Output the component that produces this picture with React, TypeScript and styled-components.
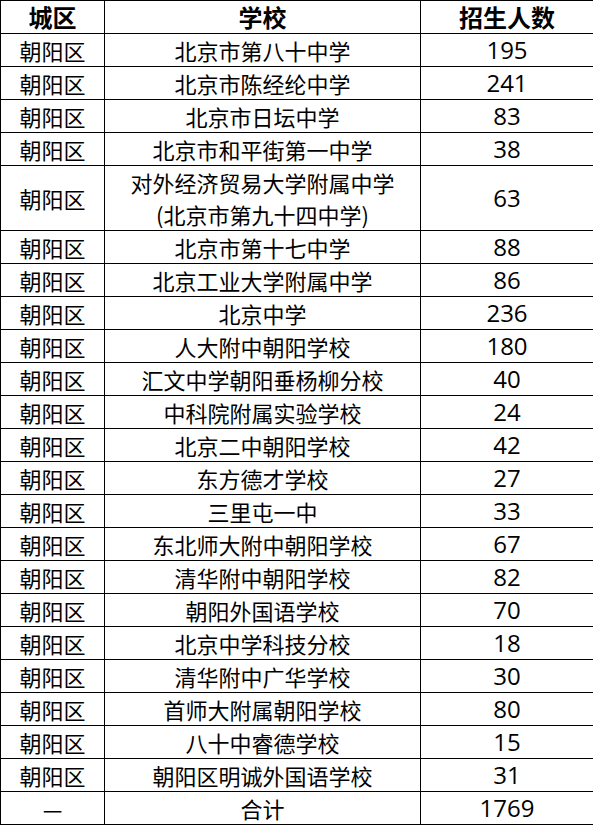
import styled, { createGlobalStyle } from 'styled-components'

const GlobalStyle = createGlobalStyle`
    html, body {
        margin: 0;
        padding: 0;
        background: #fff;
    }
    body {
        font-family: "Noto Sans CJK SC", "Noto Sans", sans-serif;
        color: #000;
    }
`

const Table = styled.table`
    width: 593px;
    table-layout: fixed;
    border-collapse: collapse;
`

const Cell = styled.td<{ $head?: boolean }>`
    border: 1px solid #000;
    padding: 0;
    height: 32px;
    line-height: 32px;
    text-align: center;
    vertical-align: middle;
    font-size: ${(p) => (p.$head ? '24px' : '22px')};
    font-weight: ${(p) => (p.$head ? 700 : 400)};
    white-space: nowrap;
    overflow: hidden;
`

const Line = styled.div`
    height: 32px;
    line-height: 32px;
`

const Count = styled(Cell)`
    font-family: "Open Sans", "Noto Sans CJK SC", sans-serif;
    font-size: 24px;
`

const rows: [string, string[], number][] = [
    ['朝阳区', ['北京市第八十中学'], 195],
    ['朝阳区', ['北京市陈经纶中学'], 241],
    ['朝阳区', ['北京市日坛中学'], 83],
    ['朝阳区', ['北京市和平街第一中学'], 38],
    ['朝阳区', ['对外经济贸易大学附属中学', '(北京市第九十四中学)'], 63],
    ['朝阳区', ['北京市第十七中学'], 88],
    ['朝阳区', ['北京工业大学附属中学'], 86],
    ['朝阳区', ['北京中学'], 236],
    ['朝阳区', ['人大附中朝阳学校'], 180],
    ['朝阳区', ['汇文中学朝阳垂杨柳分校'], 40],
    ['朝阳区', ['中科院附属实验学校'], 24],
    ['朝阳区', ['北京二中朝阳学校'], 42],
    ['朝阳区', ['东方德才学校'], 27],
    ['朝阳区', ['三里屯一中'], 33],
    ['朝阳区', ['东北师大附中朝阳学校'], 67],
    ['朝阳区', ['清华附中朝阳学校'], 82],
    ['朝阳区', ['朝阳外国语学校'], 70],
    ['朝阳区', ['北京中学科技分校'], 18],
    ['朝阳区', ['清华附中广华学校'], 30],
    ['朝阳区', ['首师大附属朝阳学校'], 80],
    ['朝阳区', ['八十中睿德学校'], 15],
    ['朝阳区', ['朝阳区明诚外国语学校'], 31],
    ['—', ['合计'], 1769],
]

export default function App() {
    return (
        <>
            <GlobalStyle />
            <Table>
                <colgroup>
                    <col style={{ width: 104 }} />
                    <col style={{ width: 316 }} />
                    <col style={{ width: 173 }} />
                </colgroup>
                <thead>
                    <tr>
                        <Cell as="th" $head>城区</Cell>
                        <Cell as="th" $head>学校</Cell>
                        <Cell as="th" $head>招生人数</Cell>
                    </tr>
                </thead>
                <tbody>
                    {rows.map(([area, school, count], i) => (
                        <tr key={i}>
                            <Cell>{area}</Cell>
                            <Cell>
                                {school.map((line, j) => (
                                    <Line key={j}>{line}</Line>
                                ))}
                            </Cell>
                            <Count>{count}</Count>
                        </tr>
                    ))}
                </tbody>
            </Table>
        </>
    )
}
